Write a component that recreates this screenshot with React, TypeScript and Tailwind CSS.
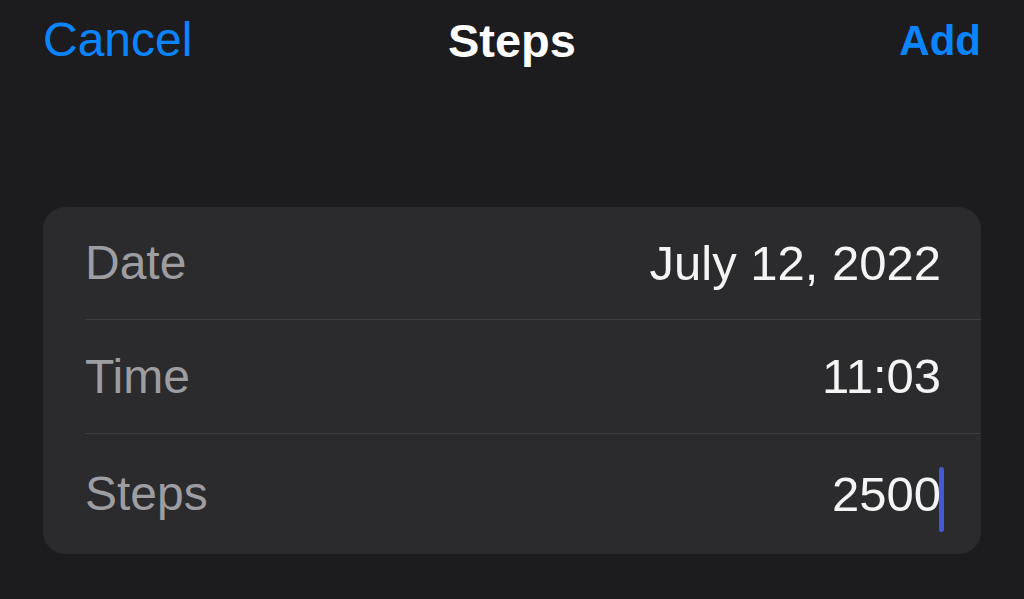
const rows = [
  { label: 'Date', value: 'July 12, 2022', h: 'h-[113px]', divider: true },
  { label: 'Time', value: '11:03', h: 'h-[114px]', divider: true },
  { label: 'Steps', value: '2500', h: 'h-[120px]', divider: false, cursor: true },
];

export default function App() {
  return (
    <div
      className="h-[599px] w-[1024px] overflow-hidden bg-[#1c1c1e] px-[43px]"
      style={{ fontFamily: '"Liberation Sans", Arial, sans-serif' }}
    >
      <div className="grid h-[80px] grid-cols-3 items-center leading-none">
        <span className="text-[48px] text-[#0a84ff]">Cancel</span>
        <span className="text-center text-[47px] font-bold text-white">Steps</span>
        <span className="pt-[2px] text-right text-[42px] font-bold text-[#0a84ff]">Add</span>
      </div>

      <div className="mt-[127px] overflow-hidden rounded-[22px] bg-[#2b2b2d]">
        {rows.map((r) => (
          <div
            key={r.label}
            className={`ml-[42px] flex ${r.h} items-center justify-between pr-[40px] ${
              r.divider ? 'border-b border-[#3d3d40]' : ''
            }`}
          >
            <span className="text-[48px] leading-none text-[#9d9da2]">{r.label}</span>
            <span className="relative text-[49px] leading-none text-[#f4f4f4]">
              {r.value}
              {r.cursor && (
                <span className="absolute right-[-3px] top-[-3px] h-[65px] w-[5px] rounded-sm bg-[#4359d6]" />
              )}
            </span>
          </div>
        ))}
      </div>
    </div>
  );
}
